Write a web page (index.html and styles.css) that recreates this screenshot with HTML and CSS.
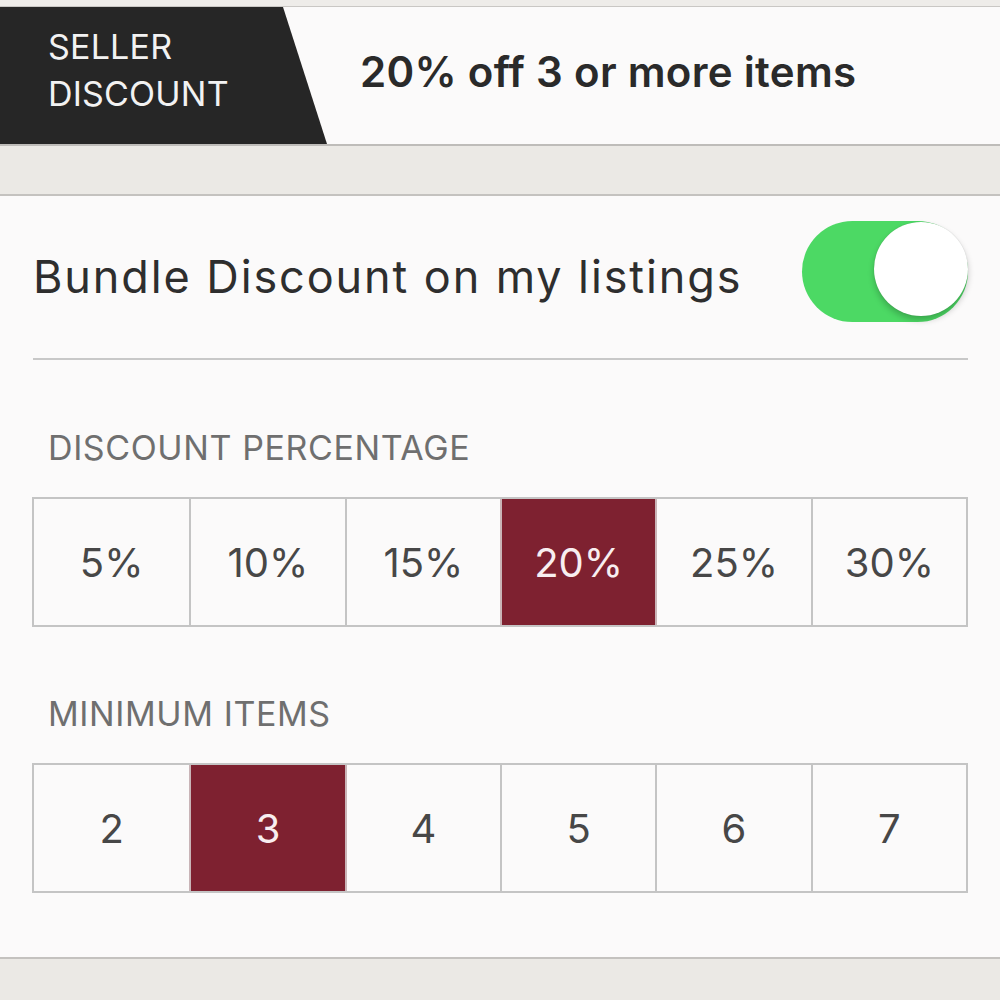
FILE: index.html
```html
<!DOCTYPE html>
<html>
<head>
<meta charset="utf-8">
<link rel="stylesheet" href="styles.css">
</head>
<body>
<div class="page">
  <div class="topband"></div>
  <header class="banner">
    <div class="tag"><span>SELLER</span><span>DISCOUNT</span></div>
    <div class="summary">20% off 3 or more items</div>
  </header>
  <div class="gap"></div>
  <section class="card">
    <div class="toggle-row">
      <div class="toggle-label">Bundle Discount on my listings</div>
      <div class="switch"><div class="knob"></div></div>
    </div>
    <div class="divider"></div>
    <div class="label label-first">DISCOUNT PERCENTAGE</div>
    <div class="options">
      <div class="opt">5%</div>
      <div class="opt">10%</div>
      <div class="opt">15%</div>
      <div class="opt selected">20%</div>
      <div class="opt">25%</div>
      <div class="opt">30%</div>
    </div>
    <div class="label">MINIMUM ITEMS</div>
    <div class="options">
      <div class="opt">2</div>
      <div class="opt selected">3</div>
      <div class="opt">4</div>
      <div class="opt">5</div>
      <div class="opt">6</div>
      <div class="opt">7</div>
    </div>
  </section>
  <div class="gap bottom"></div>
</div>
</body>
</html>
```
FILE: styles.css
```css
html, body {
  margin: 0;
  padding: 0;
}
body {
  background: #ebe9e5;
  font-family: Inter, Lato, "Noto Sans", sans-serif;
  width: 1000px;
  height: 1000px;
  overflow: hidden;
}
.page {
  display: flex;
  flex-direction: column;
}
.topband {
  height: 6px;
  background: #eeece9;
}
.banner {
  height: 137px;
  border-top: 1px solid #c9c7c4;
  border-bottom: 2px solid #bebcb9;
  background: #fbfafa;
  display: flex;
  align-items: stretch;
}
.tag {
  width: 327px;
  background: #262626;
  clip-path: polygon(0 0, 283px 0, 100% 100%, 0 100%);
  color: #f2f2f2;
  font-size: 34px;
  line-height: 47px;
  padding-left: 48px;
  box-sizing: border-box;
  display: flex;
  flex-direction: column;
  justify-content: center;
  padding-bottom: 12px;
  letter-spacing: 0.2px;
}
.summary {
  padding-left: 33px;
  display: flex;
  align-items: center;
  font-size: 42px;
  font-weight: 600;
  color: #2a2a2a;
  padding-bottom: 8px;
  letter-spacing: 0.3px;
}
.gap {
  height: 48px;
  border-bottom: 2px solid #c4c2bf;
}
.gap.bottom {
  height: 50px;
  border-bottom: none;
  border-top: 2px solid #c4c2bf;
}
.card {
  background: #fbfafa;
  height: 761px;
  padding: 0 32px 0 32px;
  box-sizing: border-box;
  display: flex;
  flex-direction: column;
}
.toggle-row {
  height: 162px;
  display: flex;
  align-items: center;
  justify-content: space-between;
}
.toggle-label {
  font-size: 45px;
  color: #2e2e2e;
  padding-left: 1px;
  letter-spacing: 1.9px;
  margin-bottom: 2px;
}
.switch {
  width: 166px;
  height: 101px;
  border-radius: 51px;
  background: #4cd964;
  position: relative;
  margin-bottom: 12px;
}
.knob {
  position: absolute;
  right: 0;
  top: 1px;
  width: 94px;
  height: 94px;
  border-radius: 50%;
  background: #ffffff;
  box-shadow: 0 4px 6px rgba(0,0,0,0.22), 0 0 1px rgba(0,0,0,0.2);
}
.divider {
  height: 2px;
  background: #c8c8c8;
  margin-left: 1px;
}
.label {
  color: #6f6f6f;
  font-size: 34px;
  height: 78px;
  display: flex;
  align-items: center;
  padding-left: 16px;
  letter-spacing: 0.6px;
  margin-bottom: 11px;
}
.label-first {
  margin-top: 48px;
}
.options {
  display: grid;
  grid-template-columns: repeat(6, 1fr);
  border: 2px solid #c4c4c4;
  height: 130px;
  box-sizing: border-box;
  margin-bottom: 47px;
}
.opt {
  display: flex;
  align-items: center;
  justify-content: center;
  font-size: 40px;
  color: #474747;
  border-left: 2px solid #c4c4c4;
  background: #fbfafa;
}
.opt:first-child {
  border-left: none;
}
.opt.selected {
  background: #7e2130;
  color: #f8eef0;
  border-left-color: #c9b4b7;
}
.opt.selected + .opt {
  border-left-color: #c9b4b7;
}
```
